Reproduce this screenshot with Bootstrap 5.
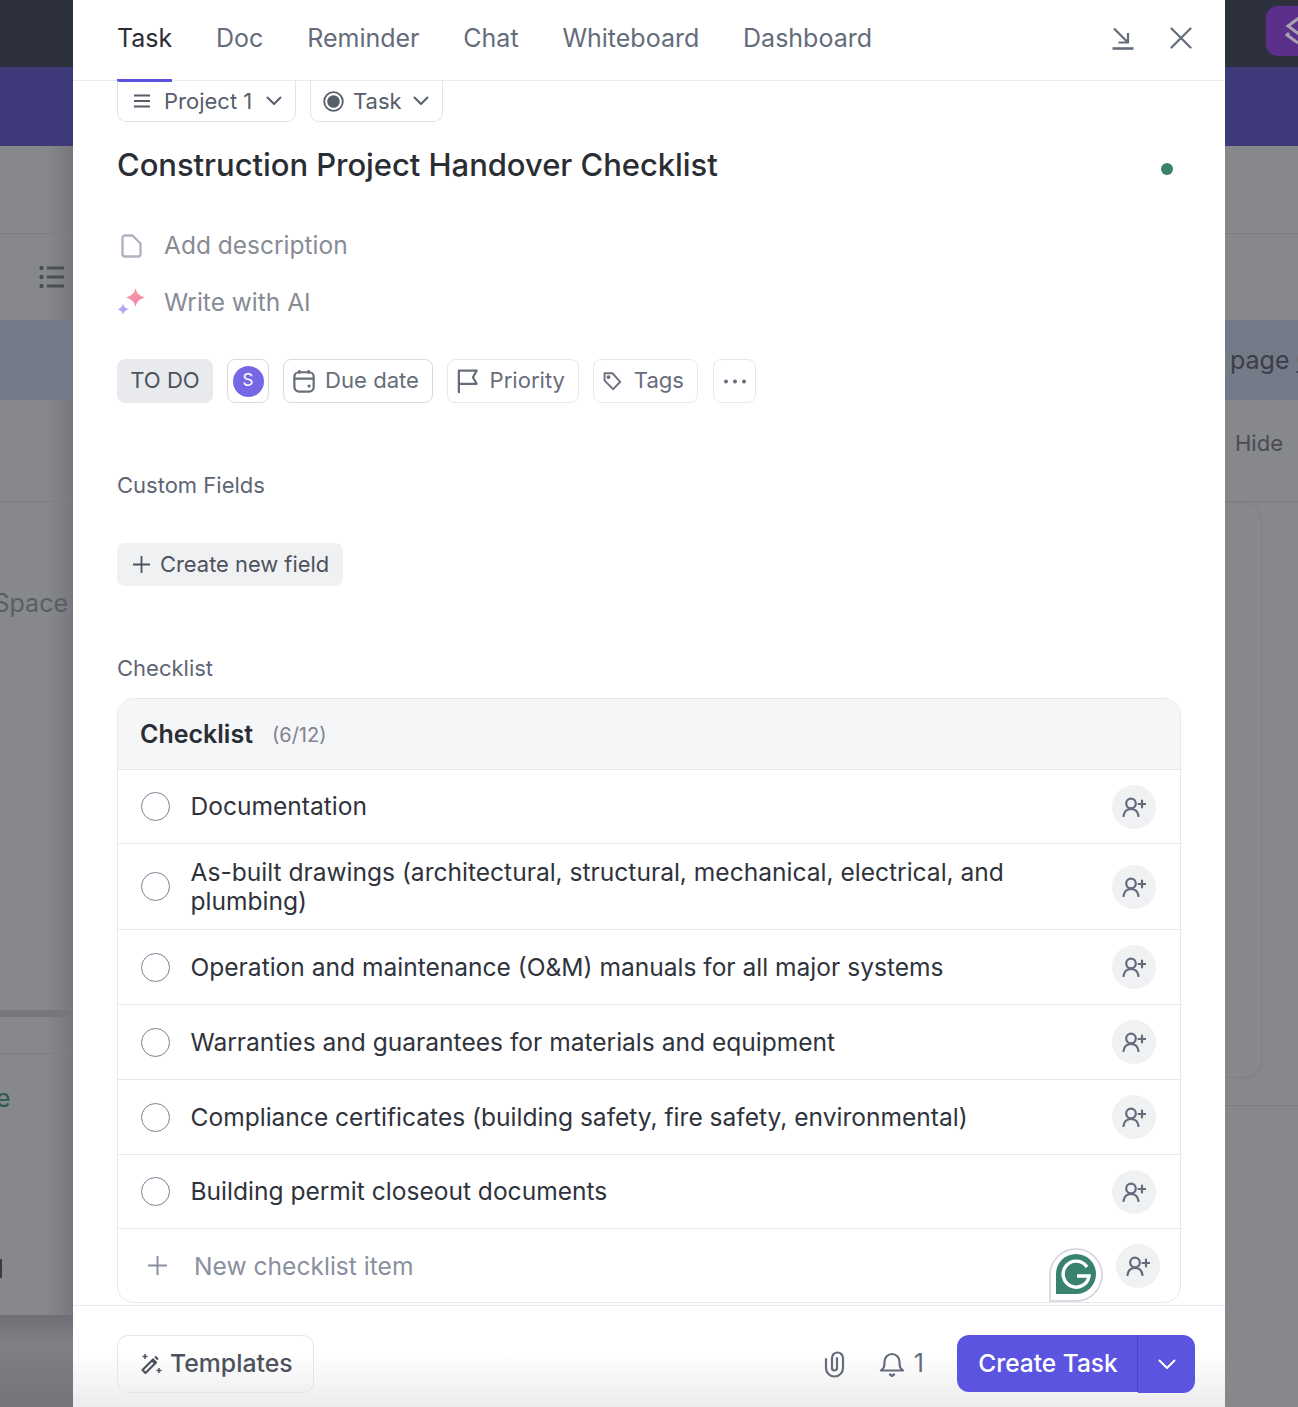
<!DOCTYPE html>
<html lang="en">
<head>
<meta charset="utf-8">
<title>Task</title>
<link href="https://cdn.jsdelivr.net/npm/bootstrap@5.3.0/dist/css/bootstrap.min.css" rel="stylesheet">
<style>
html,body{margin:0;height:1407px;overflow:hidden;background:#87888b;font-family:Inter,"Liberation Sans",sans-serif;color:#2a2e34}
.stage{height:1407px}
.strip{width:73px;flex:none;overflow:hidden;background:#87888b;color:#4e5159}
.strip-l{background:linear-gradient(90deg,#87888b 0,#87888b 45px,#77787c 100%)}
.band-dark{height:67px;background:#2d303d}
.band-purple{height:79px;background:#3e3a7a}
.band-a{height:88px;border-bottom:1px solid #7c7d80}
.band-b{height:86px}
.band-c{height:80px;background:#757a88}
.band-d{height:102px;border-bottom:1px solid #7c7d80}
.band-e{height:508px}
.band-f{height:7px;background:#76777b}
.band-g{height:37px;border-bottom:1px solid #7c7d80}
.band-h{height:261px}
.band-i{height:92px;background:linear-gradient(180deg,#6e6f74,#7f8084 30%,#747579)}
.faint{font-size:25px;line-height:30px}
.space-txt{padding:86px 5px 0 0;color:#5a5d65}
.r-text{padding-top:25px;padding-left:5px;font-size:25px;line-height:30px;white-space:nowrap;color:#3b3e47}
.r-hide{padding-top:28px;padding-left:10px;font-size:22px;line-height:30px;color:#4a4c53}
.r-logo{width:60px;height:50px;margin:6px 0 0 41px;border-radius:12px;background:#5b2f8c;padding-left:19px}
.r-box{height:576px;margin-right:36px;border:1px solid #7f8083;border-left:0;border-radius:0 18px 18px 0}
.r-line{height:1px;background:#7c7d80;margin-top:27px}
.sheet{width:1152px;flex:none;background:#fff;height:1407px}
.top{height:81px;border-bottom:1px solid #e9ebf0;padding:0 33px 0 44px}
.tabby{font-size:25px;line-height:30px;height:81px;padding-top:23px;color:#646c7b;margin-right:43.8px;position:relative}
.tabby.on{color:#2a2e34}
.tabby.on::after{content:"";position:absolute;left:0;right:0;bottom:-1px;height:3px;background:#5b54e0}
.main{height:1224px;overflow:hidden;padding:0 44px;position:relative}
.pick-row{margin-top:-1px}
.pick{height:42px;border:1px solid #e1e3e8;border-top-color:#e9ebf0;border-radius:0 0 9px 9px;font-size:22px;color:#565d6b;padding:0 13px 0 15px;margin-right:14px;white-space:nowrap}
.ttl{font-size:31px;font-weight:500;line-height:40px;margin-top:23px;color:#2a2e34;letter-spacing:-.05px}
.dotty{width:12px;height:12px;border-radius:50%;background:#3a8270;margin:41px 8px 0 0}
.hint{font-size:24.5px;line-height:30px;color:#878b95}
.ico-slot{width:47px;flex:none}
.chip{height:44px;border:1px solid #e8e9ed;border-radius:8px;font-size:22.1px;color:#676d7b;padding:0 13px;margin-right:14px;background:#fff;white-space:nowrap}
.chip-s{background:#e9eaee;border-color:#e9eaee;color:#4d525e;width:96px;padding:0;justify-content:center}
.chip-d{border-color:#d9dbe0}
.ava{width:31px;height:31px;border-radius:50%;background:#7667e6;color:#fff;font-size:17px}
.lab{font-size:22px;line-height:28px;color:#5e6574}
.addf{height:43px;width:226px;background:#f0f1f3;border-radius:8px;font-size:21.9px;color:#4d525e;padding-left:15px}
.cbox{border:1px solid #e6e8ec;border-radius:17px;width:1064px;height:605px;overflow:hidden}
.chead{height:71px;background:#f5f6f8;border-bottom:1px solid #e6e8ec;padding:2px 0 0 22px}
.chead b{font-size:25px;font-weight:600;color:#2a2e34}
.chead span{font-size:20px;color:#7f8490;margin-left:19px}
.crow{border-bottom:1px solid #e6e8ec;padding:0 24px 0 23px;font-size:24.55px;line-height:29px;color:#2f333b}
.h74{height:74px}.h75{height:75px}.h86{height:86px}
.ring{width:29px;height:29px;border:1.5px solid #7b8190;border-radius:50%;flex:none;margin-right:20.500px}
.who{width:44px;height:44px;border-radius:50%;background:#f0f1f3;flex:none}
.newi{height:73px;padding:0 20px 0 30px;color:#8a90a0;font-size:24.6px}
.newi span{margin:2px 0 0 27px}
.gram{position:absolute;left:976px;top:1166px;width:54px;height:55px}
.bottom{height:102px;border-top:1px solid #e9ebf0;padding:29px 30px 0 44px;background:linear-gradient(180deg,#fff 0,#fff 45%,#ececed 100%)}
.tpl{height:58px;width:197px;border:1px solid #e4e5e8;border-radius:11px;font-size:24.8px;font-weight:500;color:#4d525e;padding-left:22px;gap:8px}
.act{font-size:25px;color:#646c7b}
.go{height:57px;width:181px;background:#5b54e0;border-radius:12px 0 0 12px;color:#fff;font-size:24.5px;font-weight:500;border-right:1px solid #4b44c2;padding-left:2px}
.go2{height:58px;width:57px;background:#5b54e0;border-radius:0 12px 12px 0}
</style>
</head>
<body>
<div class="stage d-flex">
  <div class="strip strip-l d-flex flex-column">
    <div class="band-dark"></div>
    <div class="band-purple"></div>
    <div class="band-a"></div>
    <div class="band-b d-flex align-items-center justify-content-end pe-2">
      <svg width="26" height="24" viewBox="0 0 26 24" fill="none" stroke="#4a4d55" stroke-width="2.800"><circle cx="2.500" cy="3" r="2.200" fill="#4a4d55" stroke="none"/><circle cx="2.500" cy="12" r="2.200" fill="#4a4d55" stroke="none"/><circle cx="2.500" cy="21" r="2.200" fill="#4a4d55" stroke="none"/><path d="M8 3h17M8 12h17M8 21h17"/></svg>
    </div>
    <div class="band-c"></div>
    <div class="band-d"></div>
    <div class="band-e d-flex justify-content-end"><div class="faint space-txt">Space</div></div>
    <div class="band-f"></div>
    <div class="band-g"></div>
    <div class="band-h position-relative overflow-hidden">
      <div class="faint position-absolute" style="left:-4px;top:29px;color:#2f5a48">e</div>
      <div class="position-absolute" style="left:0;top:205px;width:2px;height:19px;background:#3a3c42"></div>
    </div>
    <div class="band-i"></div>
  </div>

  <div class="sheet d-flex flex-column">
    <div class="top d-flex">
      <div class="tabby on">Task</div>
      <div class="tabby">Doc</div>
      <div class="tabby">Reminder</div>
      <div class="tabby">Chat</div>
      <div class="tabby">Whiteboard</div>
      <div class="tabby">Dashboard</div>
      <div class="ms-auto d-flex align-items-center" style="gap:35px;margin-bottom:4px">
        <svg width="24" height="24" viewBox="0 0 24 24" fill="none" stroke="#646c7b" stroke-width="2.200"><path d="M3 2.500 17 16.500M17 7v9.500H7.500"/><path d="M1.500 22.500h21" stroke-width="2.600"/></svg>
        <svg width="22" height="22" viewBox="0 0 22 22" fill="none" stroke="#646c7b" stroke-width="2.200" stroke-linecap="round"><path d="M1.500 1.500l19 19M20.500 1.500l-19 19"/></svg>
      </div>
    </div>
    <div class="main">
      <div class="d-flex pick-row">
        <div class="pick d-flex align-items-center" style="width:179px;gap:13px">
          <svg width="18" height="14" viewBox="0 0 18 14" fill="none" stroke="#565d6b" stroke-width="2"><path d="M1 1.500h16M1 7h16M1 12.500h16"/></svg>
          <span>Project 1</span>
          <svg class="ms-auto" width="16" height="10" viewBox="0 0 16 10" fill="none" stroke="#565d6b" stroke-width="2" stroke-linecap="round" stroke-linejoin="round"><path d="M1.500 1.500 8 8l6.500-6.500"/></svg>
        </div>
        <div class="pick d-flex align-items-center" style="width:133px;gap:9px;padding:0 13px 0 12px">
          <svg width="21" height="21" viewBox="0 0 21 21"><circle cx="10.500" cy="10.500" r="9.300" fill="none" stroke="#565d6b" stroke-width="1.800"/><circle cx="10.500" cy="10.500" r="6.300" fill="#565d6b"/></svg>
          <span>Task</span>
          <svg class="ms-auto" width="16" height="10" viewBox="0 0 16 10" fill="none" stroke="#565d6b" stroke-width="2" stroke-linecap="round" stroke-linejoin="round"><path d="M1.500 1.500 8 8l6.500-6.500"/></svg>
        </div>
      </div>
      <div class="d-flex justify-content-between">
        <div class="ttl">Construction Project Handover Checklist</div>
        <div class="dotty align-self-start"></div>
      </div>
      <div class="d-flex align-items-center" style="margin-top:45px">
        <div class="ico-slot"><svg class="ms-1" width="21" height="24" viewBox="0 0 21 24" fill="none" stroke="#aeb3c0" stroke-width="2.400" stroke-linejoin="round"><path d="M4 1.500h7.500L19.500 9.500V20a2.500 2.500 0 0 1-2.500 2.500H4A2.500 2.500 0 0 1 1.500 20V4A2.500 2.500 0 0 1 4 1.500z"/></svg></div>
        <div class="hint">Add description</div>
      </div>
      <div class="d-flex align-items-center" style="margin-top:27px">
        <div class="ico-slot"><svg width="28" height="28" viewBox="0 0 28 28"><defs><linearGradient id="gp" x1="0" y1="0" x2="0" y2="1"><stop offset="0" stop-color="#f8a08f"/><stop offset="1" stop-color="#f27fc0"/></linearGradient></defs><path d="M18.500 0c1 5 3.600 7.600 9.500 9.500-5.900 1.800-8.500 4.400-9.500 9.500-1-5.100-3.700-7.700-9.500-9.500C14.800 7.600 17.500 5 18.500 0z" fill="url(#gp)"/><path d="M6 15.500c.6 3 2 4.500 5.500 5.800-3.500 1.200-4.900 2.800-5.500 5.800-.6-3-2-4.600-5.500-5.800C4 20 5.400 18.500 6 15.500z" fill="#b3a5f5"/></svg></div>
        <div class="hint">Write with AI</div>
      </div>
      <div class="d-flex" style="margin-top:42px">
        <div class="chip chip-s d-flex align-items-center">TO DO</div>
        <div class="chip chip-d d-flex align-items-center justify-content-center" style="width:42px;padding:0"><div class="ava d-flex align-items-center justify-content-center">S</div></div>
        <div class="chip chip-d d-flex align-items-center" style="width:150px;padding-left:9px;gap:10px">
          <svg width="24" height="26" viewBox="0 0 24 26" fill="none" stroke="#676d7b" stroke-width="2.400"><rect x="1.500" y="3.500" width="21" height="21" rx="5"/><path d="M1.500 10.500h21M7 1v4M17 1v4"/><circle cx="17.500" cy="18.500" r="1.800" fill="#676d7b" stroke="none"/></svg>
          <span>Due date</span>
        </div>
        <div class="chip d-flex align-items-center" style="width:132px;padding-left:9px;gap:11px">
          <svg width="23" height="26" viewBox="0 0 23 26" fill="none" stroke="#676d7b" stroke-width="2.400" stroke-linejoin="round" stroke-linecap="round"><path d="M2 25V2h19l-4 7 4 7H2"/></svg>
          <span>Priority</span>
        </div>
        <div class="chip d-flex align-items-center" style="width:105px;padding-left:9px;gap:12px;margin-right:15px">
          <svg width="24" height="24" viewBox="0 0 24 24" fill="none" stroke="#676d7b" stroke-width="2.400" stroke-linejoin="round"><path d="M2 2h10l10 11-9 9.500L2 11.500z"/><circle cx="7" cy="7" r="1.300" fill="#676d7b"/></svg>
          <span>Tags</span>
        </div>
        <div class="chip d-flex align-items-center justify-content-center" style="width:43px;padding:0;margin:0">
          <svg width="24" height="5" viewBox="0 0 24 5" fill="#676d7b"><circle cx="3" cy="2.500" r="2"/><circle cx="12" cy="2.500" r="2"/><circle cx="21" cy="2.500" r="2"/></svg>
        </div>
      </div>
      <div class="lab" style="margin-top:68px">Custom Fields</div>
      <div class="addf d-flex align-items-center" style="margin-top:44px;gap:9px">
        <svg width="19" height="19" viewBox="0 0 19 19" fill="none" stroke="#4d525e" stroke-width="1.800"><path d="M9.500 1v17M1 9.500h17"/></svg>
        <span>Create new field</span>
      </div>
      <div class="lab" style="margin-top:68px">Checklist</div>
      <div class="cbox" style="margin-top:16px">
        <div class="chead d-flex align-items-center"><b>Checklist</b><span>(6/12)</span></div>
        <div class="crow h74 d-flex align-items-center"><div class="ring"></div><div>Documentation</div><div class="who ms-auto d-flex align-items-center justify-content-center"><svg width="24" height="20" viewBox="0 0 24 20" fill="none" stroke="#646c7b" stroke-width="2.200" stroke-linecap="round"><circle cx="9" cy="6.500" r="4.800"/><path d="M1.500 19c.6-4.500 3.500-7 7.500-7s6.900 2.500 7.500 7M20 3.500v7M16.500 7h7"/></svg></div></div>
        <div class="crow h86 d-flex align-items-center"><div class="ring"></div><div style="width:860px">As-built drawings (architectural, structural, mechanical, electrical, and plumbing)</div><div class="who ms-auto d-flex align-items-center justify-content-center"><svg width="24" height="20" viewBox="0 0 24 20" fill="none" stroke="#646c7b" stroke-width="2.200" stroke-linecap="round"><circle cx="9" cy="6.500" r="4.800"/><path d="M1.500 19c.6-4.500 3.500-7 7.500-7s6.900 2.500 7.500 7M20 3.500v7M16.500 7h7"/></svg></div></div>
        <div class="crow h75 d-flex align-items-center"><div class="ring"></div><div>Operation and maintenance (O&amp;M) manuals for all major systems</div><div class="who ms-auto d-flex align-items-center justify-content-center"><svg width="24" height="20" viewBox="0 0 24 20" fill="none" stroke="#646c7b" stroke-width="2.200" stroke-linecap="round"><circle cx="9" cy="6.500" r="4.800"/><path d="M1.500 19c.6-4.500 3.500-7 7.500-7s6.900 2.500 7.500 7M20 3.500v7M16.500 7h7"/></svg></div></div>
        <div class="crow h75 d-flex align-items-center"><div class="ring"></div><div>Warranties and guarantees for materials and equipment</div><div class="who ms-auto d-flex align-items-center justify-content-center"><svg width="24" height="20" viewBox="0 0 24 20" fill="none" stroke="#646c7b" stroke-width="2.200" stroke-linecap="round"><circle cx="9" cy="6.500" r="4.800"/><path d="M1.500 19c.6-4.500 3.500-7 7.500-7s6.900 2.500 7.500 7M20 3.500v7M16.500 7h7"/></svg></div></div>
        <div class="crow h75 d-flex align-items-center"><div class="ring"></div><div>Compliance certificates (building safety, fire safety, environmental)</div><div class="who ms-auto d-flex align-items-center justify-content-center"><svg width="24" height="20" viewBox="0 0 24 20" fill="none" stroke="#646c7b" stroke-width="2.200" stroke-linecap="round"><circle cx="9" cy="6.500" r="4.800"/><path d="M1.500 19c.6-4.500 3.500-7 7.500-7s6.900 2.500 7.500 7M20 3.500v7M16.500 7h7"/></svg></div></div>
        <div class="crow h74 d-flex align-items-center"><div class="ring"></div><div>Building permit closeout documents</div><div class="who ms-auto d-flex align-items-center justify-content-center"><svg width="24" height="20" viewBox="0 0 24 20" fill="none" stroke="#646c7b" stroke-width="2.200" stroke-linecap="round"><circle cx="9" cy="6.500" r="4.800"/><path d="M1.500 19c.6-4.500 3.500-7 7.500-7s6.900 2.500 7.500 7M20 3.500v7M16.500 7h7"/></svg></div></div>
        <div class="newi d-flex align-items-center">
          <svg width="19" height="19" viewBox="0 0 19 19" fill="none" stroke="#8a90a0" stroke-width="2"><path d="M9.500 0v19M0 9.500h19"/></svg>
          <span>New checklist item</span>
          <div class="who ms-auto d-flex align-items-center justify-content-center"><svg width="24" height="20" viewBox="0 0 24 20" fill="none" stroke="#646c7b" stroke-width="2.200" stroke-linecap="round"><circle cx="9" cy="6.500" r="4.800"/><path d="M1.500 19c.6-4.500 3.500-7 7.500-7s6.900 2.500 7.500 7M20 3.500v7M16.500 7h7"/></svg></div>
        </div>
      </div>
      <svg class="gram" viewBox="0 0 54 55"><path d="M1 54V27a26 26 0 1 1 26 27z" fill="#fff" stroke="#cfd2dc" stroke-width="1.500"/><path d="M7 47V27a20 20 0 1 1 20 20z" fill="#3a8270"/><path d="M38 20a13 13 0 1 0 2 9H28" fill="none" stroke="#fff" stroke-width="3.400"/></svg>
    </div>
    <div class="bottom d-flex">
      <div class="tpl d-flex align-items-center">
        <svg width="22" height="22" viewBox="0 0 22 22" fill="none" stroke="#4d525e" stroke-width="2.200" stroke-linejoin="round"><path d="M2.500 17 13 6.500l3 3L5.500 20z"/><path d="M12 7.500l3.500 3.500M15 3.500l3 3" /><path d="M5 1v5M2.500 3.500h5M19 15v5M16.500 17.500h5" stroke-width="1.500"/></svg>
        <span>Templates</span>
      </div>
      <div class="ms-auto d-flex align-items-center act" style="height:58px;margin-right:33px">
        <svg width="22" height="28" viewBox="0 0 22 28" fill="none" stroke="#646c7b" stroke-width="2.200" stroke-linecap="round"><path d="M2 9v9a8.500 8.500 0 0 0 17 0V8a5.500 5.500 0 0 0-11 0v10a2.500 2.500 0 0 0 5 0V8"/></svg>
        <svg style="margin-left:33px" width="26" height="26" viewBox="0 0 26 26" fill="none" stroke="#646c7b" stroke-width="2.200" stroke-linejoin="round" stroke-linecap="round"><path d="M2 19.500c3-2 3.500-4 3.500-9a7.500 7.500 0 0 1 15 0c0 5 .5 7 3.500 9z"/><path d="M11 23.500l2 1.500 2-1.500"/></svg>
        <span style="margin-left:9px">1</span>
      </div>
      <div class="go d-flex align-items-center justify-content-center">Create Task</div>
      <div class="go2 d-flex align-items-center justify-content-center"><svg width="18" height="11" viewBox="0 0 18 11" fill="none" stroke="#fff" stroke-width="2" stroke-linecap="round" stroke-linejoin="round"><path d="M1.500 1.500 9 9l7.500-7.500"/></svg></div>
    </div>
  </div>

  <div class="strip d-flex flex-column">
    <div class="band-dark overflow-hidden"><div class="r-logo d-flex align-items-center"><svg width="20" height="30" viewBox="0 0 20 30" fill="none" stroke="#a6a3ad" stroke-width="3"><path d="M14 2 3 10l11 8"/><path d="M4 17l-2 2 11 8"/></svg></div></div>
    <div class="band-purple"></div>
    <div class="band-a"></div>
    <div class="band-b"></div>
    <div class="band-c r-text">page <span class="text-decoration-underline">G</span></div>
    <div class="band-d r-hide">Hide</div>
    <div class="r-box"></div>
    <div class="r-line"></div>
  </div>
</div>
</body>
</html>
